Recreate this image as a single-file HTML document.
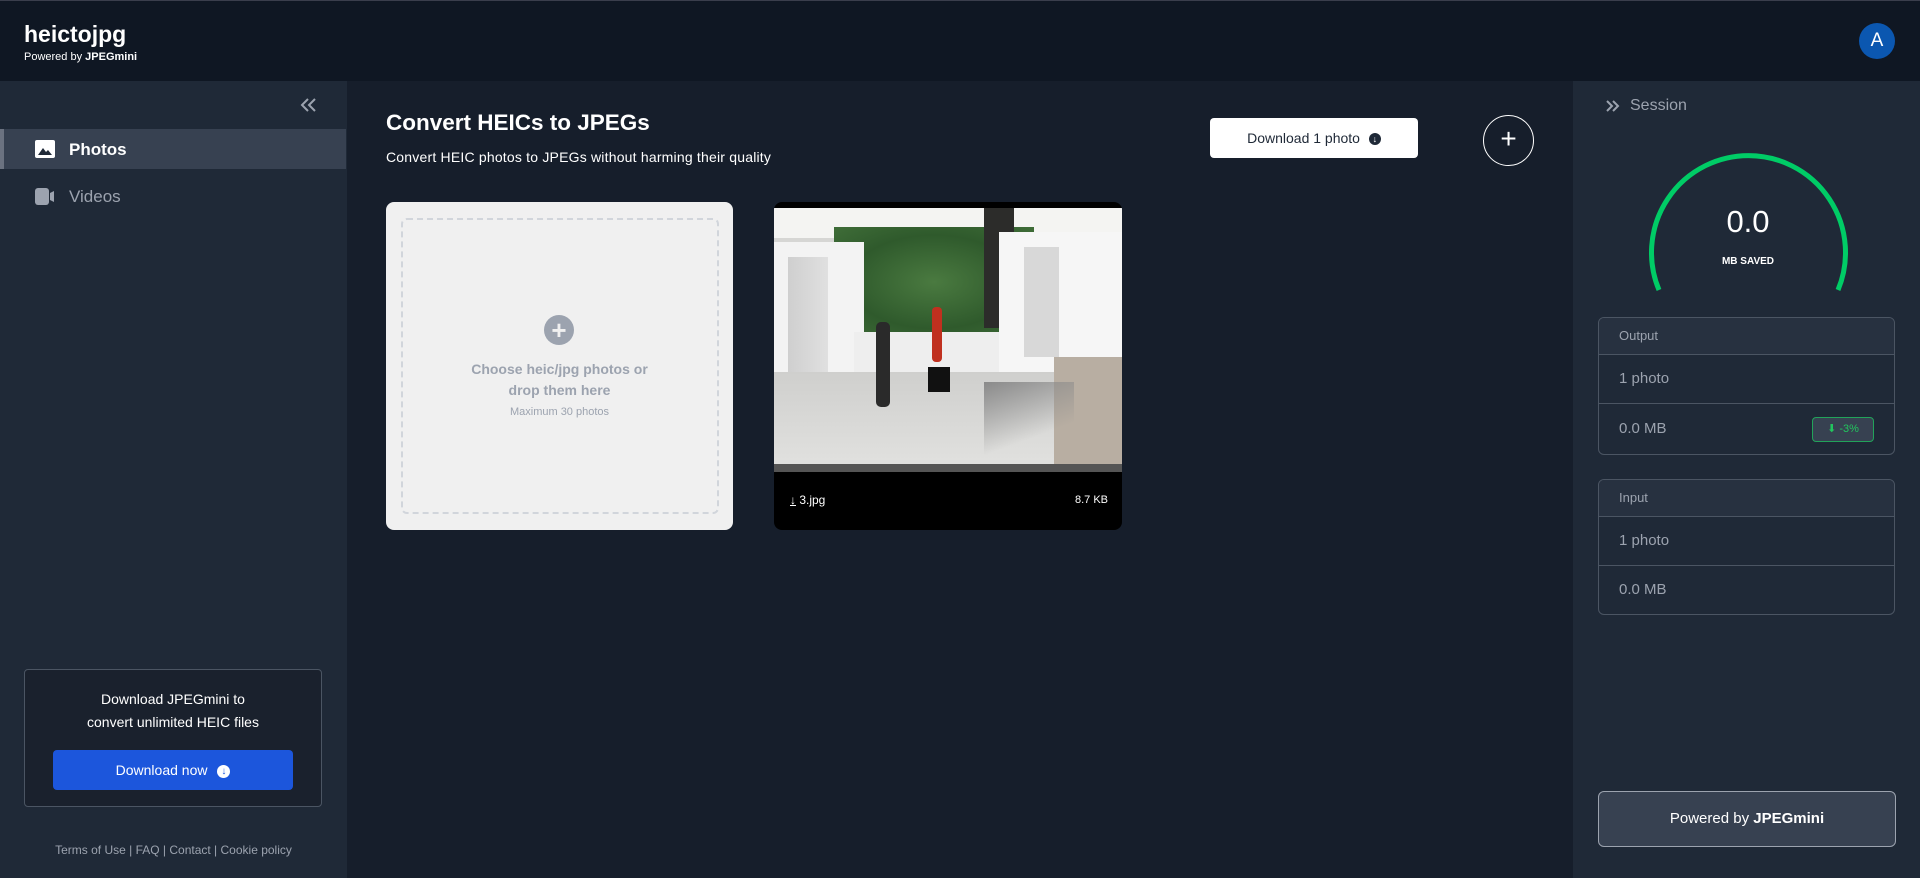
<!DOCTYPE html>
<html><head><meta charset="utf-8"><style>
*{box-sizing:border-box;margin:0;padding:0}
body{width:1920px;height:878px;overflow:hidden;background:#161e2b;font-family:"Liberation Sans",sans-serif;position:relative;color:#fff}
.abs{position:absolute}
</style></head><body>
<div class="abs" style="left:0;top:0;width:1920px;height:81px;background:#0f1723;border-top:1px solid #3a3e4c"></div>
<div class="abs" style="left:24px;top:21px;font-size:23px;font-weight:bold">heictojpg</div>
<div class="abs" style="left:24px;top:51px;font-size:11px">Powered by <b>JPEGmini</b></div>
<div class="abs" style="left:1859px;top:23px;width:36px;height:36px;border-radius:50%;background:#0b57b0;font-size:19px;text-align:center;line-height:36px">A</div>

<div class="abs" style="left:0;top:81px;width:347px;height:797px;background:#1f2937"></div>
<svg class="abs" style="left:299px;top:97px" width="18" height="16" viewBox="0 0 18 16"><path d="M9 2 3 8l6 6M16 2l-6 6 6 6" fill="none" stroke="#9ca3af" stroke-width="2"/></svg>
<div class="abs" style="left:0;top:129px;width:346px;height:40px;background:#374151;border-left:4px solid #6b7280"></div>
<svg class="abs" style="left:35px;top:140px" width="20" height="18" viewBox="0 0 20 18"><rect width="20" height="18" rx="2" fill="#fff"/><path d="M3 15l5-7 3 4 2-2 4 5z" fill="#1f2937"/></svg>
<div class="abs" style="left:69px;top:140px;font-size:17px;font-weight:bold">Photos</div>
<svg class="abs" style="left:35px;top:188px" width="20" height="17" viewBox="0 0 20 17"><rect width="14" height="17" rx="3" fill="#9ca3af"/><path d="M15 5l4-2v11l-4-2z" fill="#9ca3af"/></svg>
<div class="abs" style="left:69px;top:187px;font-size:17px;color:#9ca3af">Videos</div>

<div class="abs" style="left:24px;top:669px;width:298px;height:138px;border:1px solid #4b5563;border-radius:4px;background:#1a212d"></div>
<div class="abs" style="left:24px;top:688px;width:298px;text-align:center;font-size:14px;line-height:23px">Download JPEGmini to<br>convert unlimited HEIC files</div>
<div class="abs" style="left:53px;top:750px;width:240px;height:40px;background:#1c56dc;border-radius:4px;text-align:center;line-height:40px;font-size:14px">Download now <span style="display:inline-block;width:13px;height:13px;border-radius:50%;background:#fff;color:#1c56dc;font-size:10px;line-height:13px;vertical-align:middle;margin-left:6px;font-weight:bold">↓</span></div>
<div class="abs" style="left:0;top:843px;width:347px;text-align:center;font-size:12px;color:#9ca3af">Terms of Use | FAQ | Contact | Cookie policy</div>

<div class="abs" style="left:386px;top:110px;font-size:22.5px;font-weight:bold">Convert HEICs to JPEGs</div>
<div class="abs" style="left:386px;top:149px;font-size:14px;letter-spacing:0.2px">Convert HEIC photos to JPEGs without harming their quality</div>
<div class="abs" style="left:1210px;top:118px;width:208px;height:40px;background:#fff;border-radius:4px;color:#1f2937;font-size:14px;text-align:center;line-height:40px">Download 1 photo <span style="display:inline-block;width:12px;height:12px;border-radius:50%;background:#1f2937;color:#fff;font-size:9px;line-height:12px;vertical-align:middle;margin-left:5px;font-weight:bold">↓</span></div>
<div class="abs" style="left:1483px;top:115px;width:51px;height:51px;border:1.5px solid #fff;border-radius:50%;text-align:center;line-height:46px;font-size:28px;font-weight:300">+</div>

<div class="abs" style="left:386px;top:202px;width:347px;height:328px;background:#f0f0f0;border-radius:8px"></div>
<div class="abs" style="left:401px;top:218px;width:318px;height:296px;border:2px dashed #d1d5db;border-radius:6px"></div>
<div class="abs" style="left:544px;top:315px;width:30px;height:30px;border-radius:50%;background:#9ca3af;color:#f0f0f0;text-align:center;line-height:30px;font-size:26px;font-weight:bold">+</div>
<div class="abs" style="left:386px;top:359px;width:347px;text-align:center;font-size:14px;line-height:21px;color:#9ca3af;font-weight:bold">Choose heic/jpg photos or<br>drop them here</div>
<div class="abs" style="left:386px;top:406px;width:347px;text-align:center;font-size:11px;color:#9ca3af">Maximum 30 photos</div>

<div class="abs" style="left:774px;top:202px;width:348px;height:328px;background:#000;border-radius:8px;overflow:hidden">
 <div class="abs" style="left:0;top:6px;width:348px;height:264px;background:#d6d6d4"></div>
 <div class="abs" style="left:0;top:6px;width:348px;height:30px;background:#f4f4f2"></div>
 <div class="abs" style="left:60px;top:25px;width:200px;height:110px;background:radial-gradient(ellipse at 50% 50%,#4a7a40,#2f5a2c 60%,#3f6d38)"></div>
 <div class="abs" style="left:210px;top:6px;width:30px;height:120px;background:#2c2c2a"></div>
 <div class="abs" style="left:0;top:40px;width:90px;height:190px;background:#f3f3f3"></div>
 <div class="abs" style="left:14px;top:55px;width:40px;height:130px;background:linear-gradient(90deg,#cfcfcf,#e0e0e0)"></div>
 <div class="abs" style="left:80px;top:130px;width:190px;height:40px;background:#eee"></div>
 <div class="abs" style="left:225px;top:30px;width:123px;height:180px;background:#f6f6f6"></div>
 <div class="abs" style="left:250px;top:45px;width:35px;height:110px;background:#d8d8d8"></div>
 <div class="abs" style="left:280px;top:155px;width:68px;height:115px;background:#b8aea2"></div>
 <div class="abs" style="left:0;top:170px;width:280px;height:100px;background:linear-gradient(180deg,#cfcfcd,#e2e2e0)"></div>
 <div class="abs" style="left:210px;top:180px;width:90px;height:90px;background:linear-gradient(160deg,#8a8a8a,transparent 60%)"></div>
 <div class="abs" style="left:154px;top:165px;width:22px;height:25px;background:#111"></div>
 <div class="abs" style="left:158px;top:105px;width:10px;height:55px;background:#c0301f;border-radius:4px"></div>
 <div class="abs" style="left:102px;top:120px;width:14px;height:85px;background:#2a2a2a;border-radius:5px"></div>
 <div class="abs" style="left:0;top:262px;width:348px;height:8px;background:#555"></div>
 <div class="abs" style="left:16px;top:291px;font-size:12px"><span style="text-decoration:underline">↓</span> 3.jpg</div>
 <div class="abs" style="right:14px;top:292px;font-size:11px">8.7 KB</div>
</div>

<div class="abs" style="left:1573px;top:81px;width:347px;height:797px;background:#1f2937"></div>
<svg class="abs" style="left:1605px;top:99px" width="15" height="14" viewBox="0 0 15 14"><path d="M2 2l5 5-5 5M8 2l5 5-5 5" fill="none" stroke="#9ca3af" stroke-width="2"/></svg>
<div class="abs" style="left:1630px;top:97px;font-size:16px;color:#9ca3af">Session</div>
<svg class="abs" style="left:1573px;top:81px" width="347" height="230"><path d="M1659 289 A97 97 0 1 1 1838 289" transform="translate(-1573 -80)" fill="none" stroke="#00cc66" stroke-width="5"/></svg>
<div class="abs" style="left:1573px;top:204px;width:350px;text-align:center;font-size:31px">0.0</div>
<div class="abs" style="left:1573px;top:256px;width:350px;text-align:center;font-size:10px;font-weight:bold">MB SAVED</div>

<div class="abs" style="left:1598px;top:317px;width:297px;height:138px;border:1px solid #4b5563;border-radius:6px;overflow:hidden">
 <div style="height:37px;background:#273140;border-bottom:1px solid #4b5563;padding-left:20px;line-height:36px;font-size:13px;color:#9ca3af">Output</div>
 <div style="height:49px;border-bottom:1px solid #4b5563;padding-left:20px;line-height:48px;font-size:15px;color:#9ca3af">1 photo</div>
 <div style="height:50px;padding-left:20px;line-height:50px;font-size:15px;color:#9ca3af;position:relative">0.0 MB<span style="position:absolute;right:20px;top:13px;width:62px;height:25px;border:1px solid #22a35a;border-radius:4px;background:#374151;color:#22c55e;font-size:11px;line-height:23px;text-align:center">⬇ -3%</span></div>
</div>
<div class="abs" style="left:1598px;top:479px;width:297px;height:136px;border:1px solid #4b5563;border-radius:6px;overflow:hidden">
 <div style="height:37px;background:#273140;border-bottom:1px solid #4b5563;padding-left:20px;line-height:36px;font-size:13px;color:#9ca3af">Input</div>
 <div style="height:49px;border-bottom:1px solid #4b5563;padding-left:20px;line-height:48px;font-size:15px;color:#9ca3af">1 photo</div>
 <div style="height:48px;padding-left:20px;line-height:48px;font-size:15px;color:#9ca3af">0.0 MB</div>
</div>
<div class="abs" style="left:1598px;top:791px;width:298px;height:56px;border:1px solid #9ca3af;border-radius:6px;background:#374151;text-align:center;line-height:54px;font-size:15px">Powered by <b>JPEGmini</b></div>
</body></html>
